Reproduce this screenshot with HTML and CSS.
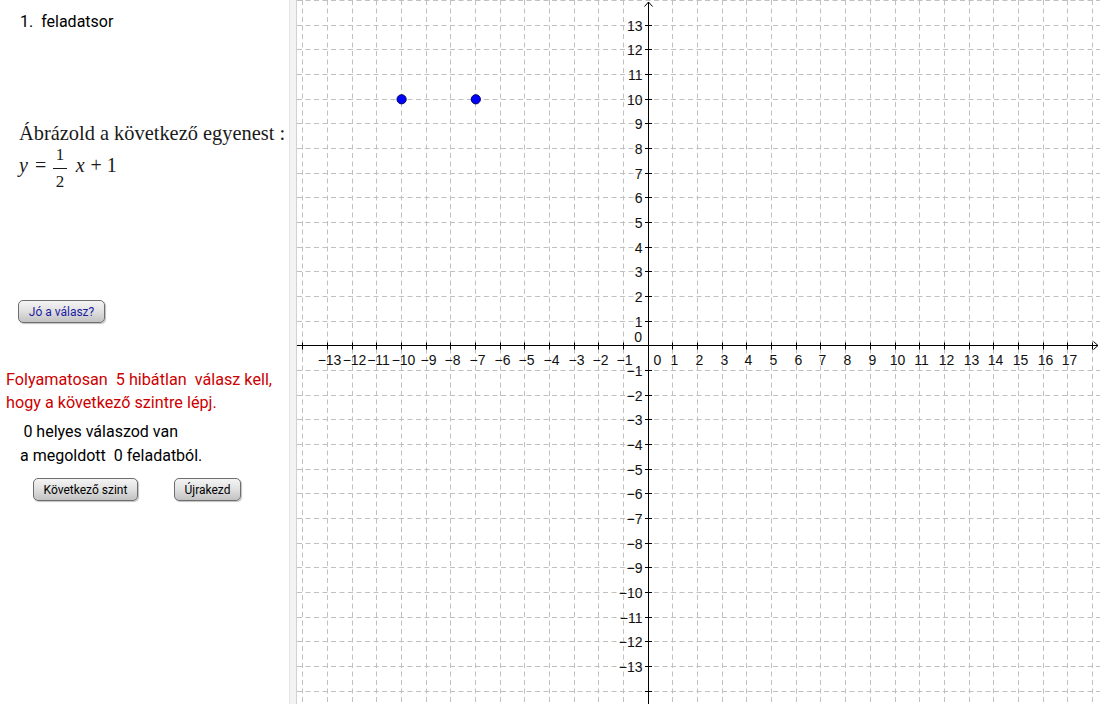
FILE: index.html
```html
<!DOCTYPE html>
<html lang="hu">
<head>
<meta charset="utf-8">
<title>1. feladatsor</title>
<link rel="stylesheet" href="styles.css">
</head>
<body>
<div class="applet">
  <div class="side">
    <div class="title">1.  feladatsor</div>
    <div class="math-line">Ábrázold a következő egyenest :</div>
    <div class="formula"><i class="mi mi-y">y</i><span class="mo mo-eq">=</span><span class="frac"><span class="num">1</span><span class="den">2</span></span><i class="mi mi-x">x</i><span class="mo mo-plus">+</span><span class="mn">1</span></div>
    <div class="check-row"><button class="gg-btn btn-check">Jó a válasz?</button></div>
    <div class="warn">Folyamatosan  5 hibátlan  válasz kell,
hogy a következő szintre lépj.</div>
    <div class="score"><div class="score-line first">0 helyes válaszod van</div><div class="score-line">a megoldott  0 feladatból.</div></div>
    <div class="btn-row">
      <button class="gg-btn btn-next">Következő szint</button>
      <button class="gg-btn btn-restart">Újrakezd</button>
    </div>
  </div>
  <div class="divider"></div>
  <div class="graph">
    <svg class="plane" width="803" height="704" viewBox="297 0 803 704" xmlns="http://www.w3.org/2000/svg">
      <path class="grid" d="M302.5 0V704M327.5 0V704M352.5 0V704M376.5 0V704M401.5 0V704M426.5 0V704M450.5 0V704M475.5 0V704M500.5 0V704M524.5 0V704M549.5 0V704M574.5 0V704M598.5 0V704M623.5 0V704M672.5 0V704M697.5 0V704M722.5 0V704M746.5 0V704M771.5 0V704M796.5 0V704M820.5 0V704M845.5 0V704M870.5 0V704M895.5 0V704M919.5 0V704M944.5 0V704M969.5 0V704M993.5 0V704M1018.5 0V704M1043.5 0V704M1067.5 0V704M1092.5 0V704"/>
      <path class="grid" d="M297 0.5H1100M297 25.5H1100M297 49.5H1100M297 74.5H1100M297 99.5H1100M297 123.5H1100M297 148.5H1100M297 173.5H1100M297 197.5H1100M297 222.5H1100M297 247.5H1100M297 271.5H1100M297 296.5H1100M297 321.5H1100M297 370.5H1100M297 395.5H1100M297 419.5H1100M297 444.5H1100M297 469.5H1100M297 493.5H1100M297 518.5H1100M297 543.5H1100M297 567.5H1100M297 592.5H1100M297 617.5H1100M297 641.5H1100M297 666.5H1100M297 691.5H1100"/>
      <path class="axis" d="M297 345.5H1098M648.5 2V704"/>
      <polyline class="axis" points="1093.5,341.5 1098,345.5 1093.5,349.5"/>
      <polyline class="axis" points="644.5,6.5 648.5,2 652.5,6.5"/>
      <path class="axis" d="M302.5 342.5V349.5M327.5 342.5V349.5M352.5 342.5V349.5M376.5 342.5V349.5M401.5 342.5V349.5M426.5 342.5V349.5M450.5 342.5V349.5M475.5 342.5V349.5M500.5 342.5V349.5M524.5 342.5V349.5M549.5 342.5V349.5M574.5 342.5V349.5M598.5 342.5V349.5M623.5 342.5V349.5M672.5 342.5V349.5M697.5 342.5V349.5M722.5 342.5V349.5M746.5 342.5V349.5M771.5 342.5V349.5M796.5 342.5V349.5M820.5 342.5V349.5M845.5 342.5V349.5M870.5 342.5V349.5M895.5 342.5V349.5M919.5 342.5V349.5M944.5 342.5V349.5M969.5 342.5V349.5M993.5 342.5V349.5M1018.5 342.5V349.5M1043.5 342.5V349.5M1067.5 342.5V349.5M1092.5 342.5V349.5"/>
      <path class="axis" d="M645 25.5H652M645 49.5H652M645 74.5H652M645 99.5H652M645 123.5H652M645 148.5H652M645 173.5H652M645 197.5H652M645 222.5H652M645 247.5H652M645 271.5H652M645 296.5H652M645 321.5H652M645 370.5H652M645 395.5H652M645 419.5H652M645 444.5H652M645 469.5H652M645 493.5H652M645 518.5H652M645 543.5H652M645 567.5H652M645 592.5H652M645 617.5H652M645 641.5H652M645 666.5H652M645 691.5H652"/>
      <g class="xl">
        <text x="329.5" y="365">−13</text>
        <text x="354.5" y="365">−12</text>
        <text x="378.5" y="365">−11</text>
        <text x="403.5" y="365">−10</text>
        <text x="428.5" y="365">−9</text>
        <text x="452.5" y="365">−8</text>
        <text x="477.5" y="365">−7</text>
        <text x="502.5" y="365">−6</text>
        <text x="526.5" y="365">−5</text>
        <text x="551.5" y="365">−4</text>
        <text x="576.5" y="365">−3</text>
        <text x="600.5" y="365">−2</text>
        <text x="624.5" y="365">−1</text>
        <text x="657.5" y="365">0</text>
        <text x="674.5" y="365">1</text>
        <text x="699.5" y="365">2</text>
        <text x="724.5" y="365">3</text>
        <text x="748.5" y="365">4</text>
        <text x="773.5" y="365">5</text>
        <text x="798.5" y="365">6</text>
        <text x="822.5" y="365">7</text>
        <text x="847.5" y="365">8</text>
        <text x="872.5" y="365">9</text>
        <text x="897.5" y="365">10</text>
        <text x="921.5" y="365">11</text>
        <text x="946.5" y="365">12</text>
        <text x="971.5" y="365">13</text>
        <text x="995.5" y="365">14</text>
        <text x="1020.5" y="365">15</text>
        <text x="1045.5" y="365">16</text>
        <text x="1069.5" y="365">17</text>
      </g>
      <g class="yl">
        <text x="642.5" y="31">13</text>
        <text x="642.5" y="55">12</text>
        <text x="642.5" y="80">11</text>
        <text x="642.5" y="105">10</text>
        <text x="642.5" y="129">9</text>
        <text x="642.5" y="154">8</text>
        <text x="642.5" y="179">7</text>
        <text x="642.5" y="203">6</text>
        <text x="642.5" y="228">5</text>
        <text x="642.5" y="253">4</text>
        <text x="642.5" y="277">3</text>
        <text x="642.5" y="302">2</text>
        <text x="642.5" y="327">1</text>
        <text x="642" y="342">0</text>
        <text x="642.5" y="376">−1</text>
        <text x="642.5" y="401">−2</text>
        <text x="642.5" y="425">−3</text>
        <text x="642.5" y="450">−4</text>
        <text x="642.5" y="475">−5</text>
        <text x="642.5" y="499">−6</text>
        <text x="642.5" y="524">−7</text>
        <text x="642.5" y="549">−8</text>
        <text x="642.5" y="573">−9</text>
        <text x="642.5" y="598">−10</text>
        <text x="642.5" y="623">−11</text>
        <text x="642.5" y="647">−12</text>
        <text x="642.5" y="672">−13</text>
      </g>
      <circle class="pt" cx="401.6" cy="99.3" r="4.6"/>
      <circle class="pt" cx="475.8" cy="99.3" r="4.6"/>
    </svg>
  </div>
</div>
</body>
</html>
```

FILE: styles.css
```css
html, body {
  margin: 0;
  padding: 0;
  background: #ffffff;
}

body {
  width: 1100px;
  height: 704px;
  overflow: hidden;
  font-family: Roboto, "Liberation Sans", Arial, sans-serif;
}

.applet {
  display: flex;
  width: 1100px;
  height: 704px;
}

.side {
  width: 289px;
  flex: 0 0 289px;
  display: flex;
  flex-direction: column;
  color: #000;
}

.title {
  margin-top: 11.5px;
  padding-left: 20px;
  font-size: 16px;
  line-height: 20px;
  white-space: pre;
}

.math-line,
.formula {
  font-family: "Liberation Serif", "Times New Roman", serif;
  color: #1a1a1a;
}

.math-line {
  margin-top: 89px;
  padding-left: 19px;
  font-size: 20.4px;
  line-height: 24px;
  white-space: nowrap;
}

.formula {
  margin-top: 1.5px;
  padding-left: 19px;
  font-size: 20px;
  line-height: 24px;
  white-space: nowrap;
}

.mi {
  font-style: italic;
}

.mo-eq {
  margin: 0 6px 0 7px;
}

.frac {
  display: inline-flex;
  flex-direction: column;
  align-items: center;
  vertical-align: 12px;
  font-size: 17px;
  line-height: 17px;
  margin-left: 1px;
}

.num {
  padding: 0 2.5px 5px 2.5px;
  border-bottom: 1px solid #1a1a1a;
}

.den {
  padding-top: 4px;
}

.mi-x {
  margin-left: 9px;
}

.mo-plus {
  margin: 0 5px 0 6px;
}

.check-row {
  margin-top: 110px;
  padding-left: 18px;
}

.gg-btn {
  display: inline-flex;
  align-items: center;
  justify-content: center;
  height: 23px;
  padding: 0;
  box-sizing: border-box;
  border: 1px solid #6e6e6e;
  border-radius: 5px;
  background: linear-gradient(#f4f4f4, #e2e2e2 45%, #c2c2c2);
  box-shadow: 1px 1px 1px rgba(0, 0, 0, 0.25);
  font-family: Roboto, "Liberation Sans", Arial, sans-serif;
  font-size: 12px;
  color: #000;
}

.btn-check {
  width: 87px;
  color: #1c1ca2;
}

.warn {
  margin-top: 46px;
  padding-left: 6px;
  font-size: 16.2px;
  line-height: 22.6px;
  color: #cc0000;
  white-space: pre;
}

.score {
  margin-top: 5.4px;
  padding-left: 20px;
  font-size: 16px;
  line-height: 24.4px;
}

.score-line {
  white-space: pre;
}

.score-line.first {
  text-indent: 3.4px;
}

.btn-row {
  margin-top: 10px;
  padding-left: 33px;
  display: flex;
  gap: 36px;
}

.btn-next {
  width: 105px;
}

.btn-restart {
  width: 67px;
}

.divider {
  width: 6px;
  flex: 0 0 6px;
  background: #f3f3f3;
  border-left: 1px solid #e4e4e4;
  border-right: 1px solid #d2d2d2;
}

.graph {
  flex: 1 1 auto;
  background: #ffffff;
  overflow: hidden;
}

.plane {
  display: block;
}

.grid {
  fill: none;
  stroke: #c0c0c0;
  stroke-width: 1;
  stroke-dasharray: 5 3.5;
}

.axis {
  fill: none;
  stroke: #000;
  stroke-width: 1;
}

.xl text,
.yl text {
  font-family: "Liberation Sans", Arial, sans-serif;
  font-size: 14px;
  fill: #111;
}

.xl text {
  text-anchor: middle;
}

.yl text {
  text-anchor: end;
}

.pt {
  fill: #0000ff;
  stroke: #000066;
  stroke-width: 1;
}
```
